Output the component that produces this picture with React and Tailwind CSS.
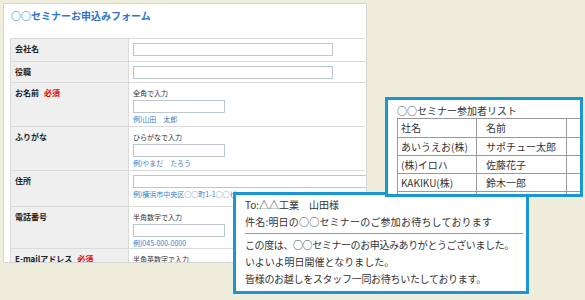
const font = { fontFamily: '"Noto Sans CJK JP", "Noto Sans", sans-serif' };

const rows = [
  { label: '会社名', h: 'h-[23px]', input: 'w-[200px]' },
  { label: '役職', h: 'h-[21px]', input: 'w-[200px]' },
  { label: 'お名前', req: true, h: 'h-[44px]', hint: '全角で入力', input: 'w-[92px]', example: '例)山田　太郎' },
  { label: 'ふりがな', h: 'h-[44px]', hint: 'ひらがなで入力', input: 'w-[92px]', example: '例)やまだ　たろう' },
  { label: '住所', h: 'h-[36px]', input: 'w-[240px]', example: '例)横浜市中央区○○町1-1○○ビル' },
  { label: '電話番号', h: 'h-[42px]', hint: '半角数字で入力', input: 'w-[92px]', example: '例)045-000-0000' },
  { label: 'E-mailアドレス', req: true, h: 'h-[40px]', hint: '半角英数字で入力', input: 'w-[200px]' },
];

const FormRow = ({ row }) => (
  <div className={`grid grid-cols-[118px_1fr] border-b border-[#dadada] ${row.h}`}>
    <div className="bg-[#efefef] border-r border-[#dadada] pl-[4px] pt-[4px] text-[8px] font-bold text-[#222] leading-[12px] whitespace-nowrap">
      {row.label}
      {row.req && <span className="text-[#e00000] ml-[5px]">必須</span>}
    </div>
    <div className="pl-[4px] pt-[4px] flex flex-col items-start">
      {row.hint && <div className="text-[7px] leading-[10px] text-[#333] mb-[2px] mt-[1px]">{row.hint}</div>}
      <div className={`${row.input} h-[13px] border border-[#b9c5d2] bg-white shrink-0`} />
      {row.example && (
        <div className="text-[7px] leading-[10px] text-[#3a7cc8] mt-[1px] whitespace-nowrap">{row.example}</div>
      )}
    </div>
  </div>
);

const listRows = [
  ['社名', '名前'],
  ['あいうえお(株)', 'サポチュー太郎'],
  ['(株)イロハ', '佐藤花子'],
  ['KAKIKU(株)', '鈴木一郎'],
  ['', ''],
];

export default function App() {
  return (
    <div className="relative w-[585px] h-[300px] overflow-hidden bg-[#efeedc]" style={font}>
      {/* Form */}
      <div className="ml-[3px] mt-[3px] w-[364px] h-[260px] bg-white border border-[#d4d4d4] overflow-hidden">
        <div className="h-[34px] pl-[7px] pt-[5px] text-[10px] font-bold text-[#2e74cc] leading-[14px]">
          ○○セミナーお申込みフォーム
        </div>
        <div className="ml-[6px] mr-[1px] border-t border-l border-[#dadada]">
          {rows.map((r) => (
            <FormRow key={r.label} row={r} />
          ))}
        </div>
      </div>

      {/* Email */}
      <div className="absolute left-[233px] top-[192px] w-[296px] h-[102px] bg-white border-[3px] border-[#1897d4] overflow-hidden pl-[9px] pr-[3px] pt-[1px] text-[10px] leading-[17px] text-[#333] whitespace-nowrap">
        <div>To:△△工業　山田様</div>
        <div className="tracking-[0.2px]">件名:明日の○○セミナーのご参加お待ちしております</div>
        <div className="h-px bg-[#9a9a9a] my-[3px]" />
        <div className="leading-[16px] tracking-[-0.4px]">この度は、○○セミナーのお申込みありがとうございました。</div>
        <div className="leading-[17px]">いよいよ明日開催となりました。</div>
        <div className="leading-[18px] tracking-[-0.3px]">皆様のお越しをスタッフ一同お待ちいたしております。</div>
      </div>

      {/* Participant list */}
      <div className="absolute left-[385px] top-[97px] w-[198px] h-[100px] bg-white border-[3px] border-[#1897d4] overflow-hidden text-[10px] text-[#333]">
        <div className="pl-[9px] pt-[3px] h-[18px] leading-[15px]">○○セミナー参加者リスト</div>
        <div className="ml-[9px] border-t border-l border-[#999]">
          {listRows.map((r, i) => (
            <div
              key={i}
              className={`grid grid-cols-[79px_90px_1fr] border-b border-[#999] ${i === 0 ? 'h-[19px]' : 'h-[18px]'}`}
            >
              <div className="border-r border-[#999] pl-[3px] leading-[17px] whitespace-nowrap">{r[0]}</div>
              <div className="border-r border-[#999] pl-[9px] leading-[17px] whitespace-nowrap">{r[1]}</div>
              <div />
            </div>
          ))}
        </div>
      </div>
    </div>
  );
}
